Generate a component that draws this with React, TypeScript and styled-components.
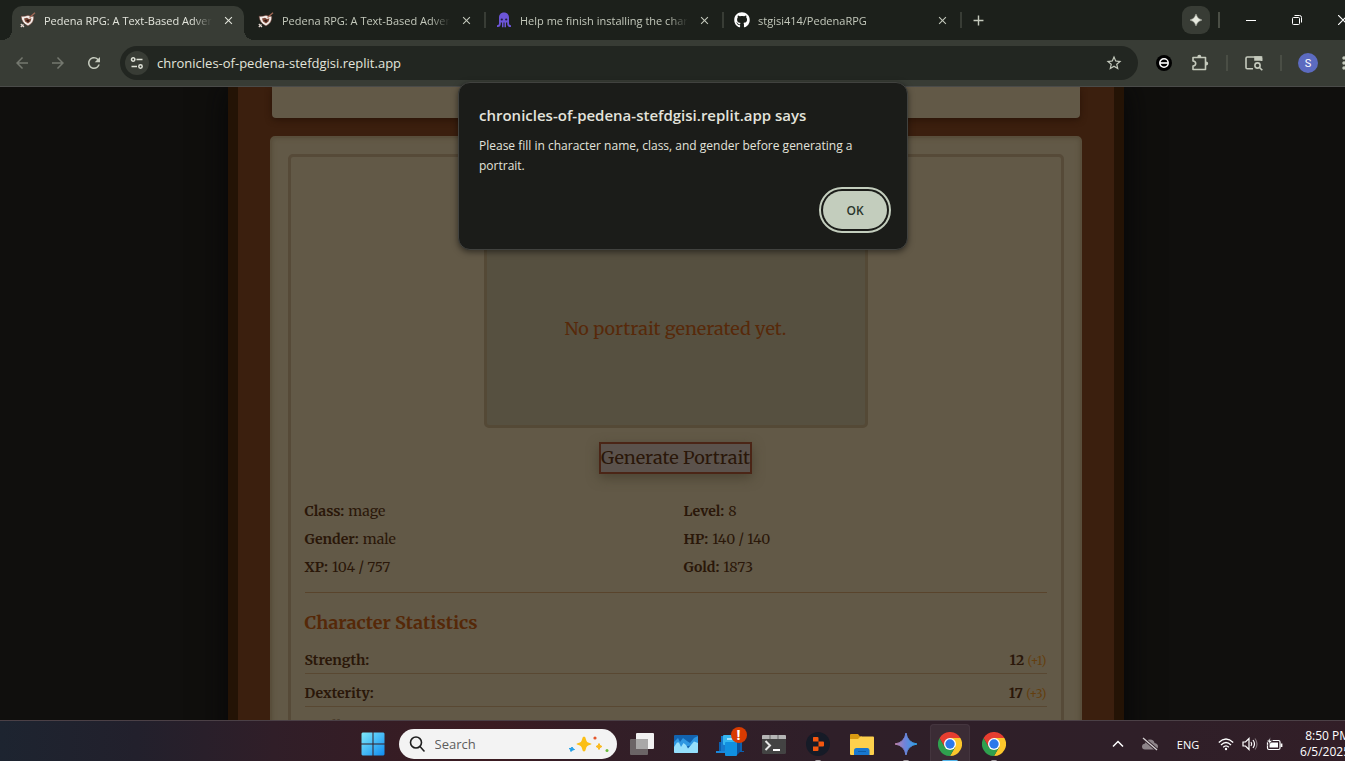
import React from "react";
import styled, { createGlobalStyle, css } from "styled-components";
import { FaGithub } from "react-icons/fa";
import { MdArrowBack, MdArrowForward, MdRefresh, MdStarBorder, MdAdd, MdClose, MdMoreVert } from "react-icons/md";

const GlobalStyle = createGlobalStyle`
  * { box-sizing: border-box; }
  body { margin: 0; background: #100f0d; font-family: "Segoe UI", "Open Sans", "Noto Sans", sans-serif; }
  button, input { font: inherit; color: inherit; border: 0; padding: 0; background: none; }
  h1, h2, h3, p, dl, dd, dt { margin: 0; }
  svg { display: block; flex: none; }
`;

const serif = `Merriweather, "DejaVu Serif Condensed", "DejaVu Serif", serif`;

/* The desktop extends slightly past the right edge of the viewport. */
const Viewport = styled.div`
  height: 100vh;
  overflow: hidden;
`;

const Desktop = styled.div`
  position: relative;
  width: calc(100% + 21px);
  height: 100%;
  display: flex;
  flex-direction: column;
`;

/* ---------- Browser chrome ---------- */

const TabStrip = styled.header`
  display: flex;
  align-items: center;
  flex: none;
  height: 40px;
  padding-left: 12px;
  background: #1c201b;
  color: #c5cabd;
`;

const Tab = styled.div<{ $active?: boolean; $divider?: boolean }>`
  position: relative;
  display: flex;
  align-items: center;
  gap: 8px;
  width: 232px;
  height: 34px;
  margin: 6px 6px 0 0;
  padding: 0 8px 6px;
  font-size: 12px;
  color: #c3c8bb;
  ${(p) =>
    p.$active &&
    css`
      background: #383c35;
      color: #e3e5dc;
      border-radius: 10px 10px 0 0;
      &::before, &::after {
        content: "";
        position: absolute;
        bottom: 0;
        width: 10px;
        height: 10px;
      }
      &::before { left: -10px; background: radial-gradient(circle at 0 0, transparent 10px, #383c35 10px); }
      &::after { right: -10px; background: radial-gradient(circle at 100% 0, transparent 10px, #383c35 10px); }
    `}
  ${(p) =>
    p.$divider &&
    css`
      &::after {
        content: "";
        position: absolute;
        right: -4px;
        top: 6px;
        width: 2px;
        height: 16px;
        background: #383c35;
      }
    `}
`;

const TabTitle = styled.span`
  flex: 1;
  min-width: 0;
  margin-top: 2px;
  overflow: hidden;
  white-space: nowrap;
  font-size: 11px;
  line-height: 18px;
  mask-image: linear-gradient(to right, #000 calc(100% - 20px), transparent);
`;

const TabClose = styled.button`
  display: grid;
  place-items: center;
  width: 16px;
  height: 16px;
`;

const NewTab = styled.button`
  display: grid;
  place-items: center;
  width: 28px;
  height: 28px;
`;

const Spacer = styled.div`
  flex: 1;
`;

const SparkButton = styled.button`
  display: grid;
  place-items: center;
  width: 28px;
  height: 28px;
  border-radius: 9px;
  background: #383c35;
  color: #e6e9df;
`;

const Rule = styled.span`
  width: 2px;
  height: 16px;
  margin: 0 8px;
  background: #4a4e45;
  flex: none;
`;

const CaptionButton = styled.button`
  display: grid;
  place-items: center;
  width: 46px;
  height: 40px;
  color: #fff;
`;

const Toolbar = styled.div`
  display: flex;
  align-items: center;
  flex: none;
  height: 47px;
  padding: 0 4px;
  background: #383c35;
  border-bottom: 1px solid #4a4b49;
  color: #c5cabd;
`;

const ToolButton = styled.button<{ $dim?: boolean; $narrow?: boolean }>`
  display: grid;
  place-items: center;
  width: ${(p) => (p.$narrow ? 34 : 36)}px;
  height: 34px;
  flex: none;
  color: ${(p) => (p.$dim ? "#74786f" : "#c5cabd")};
`;

const Omnibox = styled.div`
  display: flex;
  align-items: center;
  gap: 8px;
  flex: 1;
  height: 34px;
  margin: 0 8px;
  padding: 0 7px 0 5px;
  border-radius: 17px;
  background: #222621;
`;

const SiteInfo = styled.button`
  display: grid;
  place-items: center;
  width: 24px;
  height: 24px;
  border-radius: 12px;
  background: #383c35;
  flex: none;
`;

const Address = styled.input`
  flex: 1;
  min-width: 0;
  height: 24px;
  font-size: 13px;
  color: #e3e5dc;
  outline: 0;
`;

const Avatar = styled.button`
  display: grid;
  place-items: center;
  width: 20px;
  height: 20px;
  margin: 0 8px;
  border-radius: 10px;
  background: #5c6bc0;
  color: #fff;
  font-family: Roboto, sans-serif;
  font-size: 11px;
`;

/* ---------- Game page ---------- */

const Page = styled.main`
  flex: 1;
  min-height: 0;
  overflow: hidden;
  padding-right: 15px;
  background: #100f0d;
  color: #2a1709;
  font-family: ${serif};
  font-size: 14px;
`;

const Book = styled.div`
  max-width: 896px;
  margin: 0 auto;
  padding: 0 32px 32px;
  border: solid #241305;
  border-width: 0 10px;
  background: #3b1f0e;
  box-shadow: 0 0 30px #060607;
`;

const BannerCard = styled.div`
  height: 31px;
  margin: 0 2px 18px;
  border-radius: 0 0 4px 4px;
  background: #625947;
  box-shadow: 0 2px 6px #2a1408;
`;

const SheetCard = styled.section`
  padding: 16px;
  border: 2px solid #594e3b;
  border-radius: 5px;
  background: #625947;
  box-shadow: inset 0 0 5px #564b38;
`;

const Sheet = styled.div`
  padding: 71px 14px 15px;
  border: 3px solid #564a38;
  border-radius: 5px;
`;

const Portrait = styled.div`
  display: grid;
  place-items: center;
  max-width: 384px;
  height: 200px;
  margin: 0 auto 14px;
  border: 3px solid #544936;
  border-radius: 5px;
  background: #565040;
  color: #57290a;
  font-size: 18px;
`;

const GenerateButton = styled.button`
  display: block;
  height: 32px;
  margin: 0 auto 23px;
  border: 2px solid #4b2516;
  background: #5b524c;
  box-shadow: 0 4px 12px #4c4433;
  font-size: 18px;
  line-height: 28px;
  white-space: nowrap;
`;

const Facts = styled.dl`
  display: grid;
  grid-template-columns: 1fr 1fr;
  column-gap: 16px;
  padding-bottom: 11px;
  border-bottom: 1px solid #59442c;
`;

const Fact = styled.div`
  display: flex;
  gap: 4px;
  line-height: 28px;
  font-size: 14px;
  dt { font-weight: 700; }
`;

const SectionTitle = styled.h2`
  margin: 16px 0 4px;
  font-size: 18px;
  line-height: 28px;
  font-weight: 700;
  color: #552808;
`;

const Stat = styled.div`
  display: flex;
  justify-content: space-between;
  height: 33px;
  padding-top: 5px;
  border-bottom: 1px solid #594832;
  font-size: 14px;
  line-height: 28px;
  font-weight: 700;
`;

const Modifier = styled.span`
  font-size: 12px;
  font-weight: 400;
  color: #643f0f;
`;

/* ---------- Alert ---------- */

const Alert = styled.div`
  position: absolute;
  top: 82px;
  left: 0;
  right: 0;
  margin: 0 auto;
  width: 450px;
  padding: 20px;
  border: 1px solid #41423f;
  border-radius: 12px;
  background: #1b1c19;
  color: #e3e3dc;
  box-shadow: 0 2px 6px rgba(0, 0, 0, 0.5);
`;

const AlertTitle = styled.h1`
  font-size: 15px;
  line-height: 24px;
  font-weight: 600;
`;

const AlertText = styled.p`
  margin: 9px 0 15px;
  font-size: 12px;
  line-height: 20px;
`;

const OkButton = styled.button`
  display: block;
  width: 64px;
  height: 38px;
  margin: 0 0 0 auto;
  border-radius: 19px;
  background: #c3cdbd;
  color: #2a352b;
  font-size: 12px;
  font-weight: 600;
  outline: 2px solid #c3cdbd;
  outline-offset: 2px;
`;

/* ---------- Taskbar ---------- */

const Taskbar = styled.footer`
  flex: none;
  height: 41px;
  overflow: hidden;
  border-top: 1px solid #4b4046;
  background: linear-gradient(90deg, #1d2430 0%, #22202c 10%, #301e28 20%, #3b1b21 36%, #331e27 44%, #2f1f29 60%, #2f1f28 85%, #321e27 100%);
`;

const TaskbarRow = styled.div`
  display: grid;
  grid-template-columns: 1fr auto 1fr;
  align-items: center;
  height: 46px;
`;

const Apps = styled.nav`
  grid-column: 2;
  display: flex;
  align-items: center;
`;

const AppButton = styled.button<{ $active?: boolean; $running?: boolean }>`
  position: relative;
  display: grid;
  place-items: center;
  width: 40px;
  height: 40px;
  margin: 0 2px;
  border-radius: 4px;
  ${(p) => p.$active && css`background: #3b2c35; box-shadow: inset 0 0 0 1px #44353e;`}
  ${(p) =>
    (p.$active || p.$running) &&
    css`
      &::after {
        content: "";
        position: absolute;
        bottom: 1px;
        width: ${p.$active ? 16 : 6}px;
        height: 3px;
        border-radius: 2px;
        background: ${p.$active ? "#55b8ee" : "#a49ca1"};
      }
    `}
`;

const SearchBox = styled.label`
  display: flex;
  align-items: center;
  gap: 10px;
  width: 218px;
  height: 30px;
  margin: 0 3px 0 4px;
  padding: 0 7px 0 10px;
  border-radius: 15px;
  background: #f3f3f3;
  input {
    flex: 1;
    min-width: 0;
    font-size: 13px;
    outline: 0;
  }
  input::placeholder { color: #5d5d5d; opacity: 1; }
`;

const Tray = styled.div`
  display: flex;
  align-items: center;
  justify-content: flex-end;
  padding-right: 16px;
  color: #fff;
  font-size: 11px;
`;

const TrayButton = styled.button<{ $w: number }>`
  display: grid;
  place-items: center;
  width: ${(p) => p.$w}px;
  height: 32px;
`;

const Clock = styled.time`
  width: 60px;
  text-align: right;
  white-space: nowrap;
  font-size: 12px;
  line-height: 16px;
`;

/* ---------- Drawings ---------- */

const ShieldIcon = () => (
  <svg width="16" height="16" viewBox="0 0 16 16">
    <path d="M1 4.200Q5 4.600 8 3.200Q11 4.600 13.800 4.200Q14.500 10.500 8 14Q1.500 11 1 4.200Z" fill="#f4ece8" stroke="#5a2f25" strokeWidth=".6" />
    <path d="M4 6.500L7 5.800L9 7L11.500 6.200L10.500 9.500L8 11.500L5 9.500Z" fill="#7a4636" />
    <path d="M6 8.500L8 7.500L9.500 9L8 10Z" fill="#2b1512" />
    <path d="M9.500 5.500L15 .8" stroke="#a06755" strokeWidth="1.400" />
    <path d="M.8 12L4 15M.8 15L3.500 12.500" stroke="#e6d8d2" strokeWidth="1.200" />
  </svg>
);

const SquidIcon = () => (
  <svg width="16" height="16" viewBox="0 0 16 16" fill="#6c55d8">
    <path d="M8 .5C4.800.5 3 2.800 3 5.500V11.500Q3 13.500 1 13.300V15Q4.500 15.500 4.800 12V10.500H6V15.300H7.500V10.500H8.500V15.300H10V10.500H11.200V12Q11.500 15.500 15 15V13.300Q13 13.500 13 11.500V5.500C13 2.800 11.200.5 8 .5Z" />
    <circle cx="5.800" cy="7.500" r="1.100" fill="#1f1a3c" />
    <circle cx="10.200" cy="7.500" r="1.100" fill="#1f1a3c" />
  </svg>
);

const Spark = () => (
  <svg width="12" height="12" viewBox="0 0 14 14" fill="currentColor">
    <path d="M7 0Q8.200 5.800 14 7Q8.200 8.200 7 14Q5.800 8.200 0 7Q5.800 5.800 7 0Z" stroke="currentColor" strokeWidth=".4" />
  </svg>
);

const TuneIcon = () => (
  <svg width="14" height="14" viewBox="0 0 14 14" fill="none" stroke="#dfe2d8" strokeWidth="1.500">
    <circle cx="3.200" cy="3.500" r="1.700" />
    <path d="M6.500 3.500H12.500M1.500 10.500H7" />
    <circle cx="10.500" cy="10.500" r="1.700" />
  </svg>
);

const ExtensionBadge = () => (
  <svg width="16" height="16" viewBox="0 0 16 16" fill="none">
    <circle cx="8" cy="8" r="8" fill="#000" />
    <circle cx="8" cy="8" r="4.200" stroke="#fff" strokeWidth="1.500" />
    <path d="M4 8H12" stroke="#fff" strokeWidth="1.600" />
  </svg>
);

const PuzzleIcon = () => (
  <svg width="18" height="18" viewBox="0 0 18 18" fill="none" stroke="#c5cabd" strokeWidth="1.600" strokeLinejoin="round">
    <path d="M2 3.500H14.500V15.500H2V12Q4.700 11.700 4.700 9.500Q4.700 7.300 2 7Z" />
    <path d="M6.300 3A2 2.200 0 0 1 10.300 3ZM15 7.500A2.200 2 0 0 1 15 11.500Z" fill="#c5cabd" stroke="none" />
  </svg>
);

const LensIcon = () => (
  <svg width="18" height="16" viewBox="0 0 18 16" fill="none" stroke="#c5cabd" strokeWidth="1.600">
    <path d="M8 13.700H2.300Q1 13.700 1 12.400V3.300Q1 2 2.300 2H15.200Q16.500 2 16.500 3.300V6" />
    <path d="M10 2H16.500V5H10Z" fill="#c5cabd" />
    <circle cx="12.500" cy="10.500" r="2.600" />
    <path d="M14.500 12.500L17.300 15.300" />
  </svg>
);

const RestoreIcon = () => (
  <svg width="12" height="12" viewBox="0 0 12 12" fill="none" stroke="#fff" strokeWidth="1">
    <rect x="1.500" y="3.500" width="7" height="7" rx="1" />
    <path d="M3.500 1.500H8.500Q10.500 1.500 10.500 3.500V8.500" />
  </svg>
);

const StartIcon = () => (
  <svg width="24" height="24" viewBox="0 0 24 24">
    <defs>
      <linearGradient id="start" x1="0" y1="0" x2="1" y2="1">
        <stop offset="0" stopColor="#7fe9fb" />
        <stop offset="1" stopColor="#0f8cf0" />
      </linearGradient>
    </defs>
    <path d="M1.500.5H11.500V11.500H.5V1.500ZM12.500.5H22.500L23.500 1.500V11.500H12.500ZM.5 12.500H11.500V23.500H1.500L.5 22.500ZM12.500 12.500H23.500V22.500L22.500 23.500H12.500Z" fill="url(#start)" />
  </svg>
);

const MagnifierIcon = () => (
  <svg width="16" height="16" viewBox="0 0 16 16" fill="none" stroke="#1f1f1f" strokeWidth="1.600" strokeLinecap="round">
    <circle cx="7" cy="6.500" r="5.500" />
    <path d="M11 10.500L15 15" />
  </svg>
);

const SparklesIcon = () => (
  <svg width="42" height="20" viewBox="0 0 42 20">
    <path d="M16 2.500Q17.500 2.500 18 5.500Q18.500 8.500 21.500 9Q23.500 9.500 23.500 10Q23.500 10.500 21.500 11Q18.500 11.500 18 14.500Q17.500 17.500 16 17.500Q14.500 17.500 14 14.500Q13.500 11.500 10.500 11Q8.500 10.500 8.500 10Q8.500 9.500 10.500 9Q13.500 8.500 14 5.500Q14.500 2.500 16 2.500Z" fill="#fbbf16" />
    <path d="M31 9.500Q31.500 12 34 12.500Q31.500 13 31 15.500Q30.500 13 28 12.500Q30.500 12 31 9.500Z" fill="#fbb91c" stroke="#fbb91c" />
    <path d="M4 13L4.800 14.600L6.500 15.500L4.500 16L3 17.500L2.500 15.800L1.200 14.500L3.300 14.400Z" fill="#1b9de8" stroke="#1b9de8" />
    <circle cx="27" cy="4" r="1.600" fill="#e4572c" />
    <circle cx="39" cy="16.500" r="1.500" fill="#6cbb3c" />
  </svg>
);

const TaskViewIcon = () => (
  <svg width="24" height="22" viewBox="0 0 24 22">
    <rect x="6" y="0" width="18" height="16" rx="1" fill="#f1f1f1" />
    <rect x="0" y="6" width="18" height="16" rx="1" fill="#6b6466" />
    <rect x="6" y="6" width="12" height="10" fill="#a9a8a8" />
  </svg>
);

const MonitorIcon = () => (
  <svg width="24" height="18" viewBox="0 0 24 18">
    <rect width="24" height="18" rx="1" fill="#1263b0" />
    <path d="M0 7L4 3L6 7L9 3L13 6L16 8L20 3L24 1V9L0 14Z" fill="#2f97e2" />
    <path d="M0 12L3 7.500L5 7.500L7 12L9.500 8L12 10L14 13.500L17 10L20 6.500L24 8V17Q24 18 23 18H1Q0 18 0 17Z" fill="#95dffc" />
  </svg>
);

const PhoneLinkIcon = () => (
  <svg width="28" height="28" viewBox="0 0 28 28">
    <path d="M3 12H26V21H28V22H2V21H3Z" fill="#0b5fae" />
    <path d="M5 6H10V22H5Z" fill="#1779cc" />
    <path d="M0 21H13V23H0Z" fill="#1a86da" />
    <rect x="7" y="5" width="14" height="10" rx="1" fill="#36b7f0" />
    <rect x="9" y="12" width="12" height="14" rx="1" fill="#1190e0" />
    <path d="M21 12V25L24 22V12Z" fill="#0a519a" />
    <path d="M11 9H16" stroke="#c9f2ff" strokeWidth="1.500" />
  </svg>
);

const AlertBadge = styled.span`
  position: absolute;
  top: 3px;
  right: 3px;
  width: 16px;
  height: 16px;
  border-radius: 8px;
  background: #d83b01;
  color: #fff;
  font-size: 14px;
  line-height: 16px;
  font-weight: 700;
  text-align: center;
`;

const TerminalIcon = () => (
  <svg width="24" height="19" viewBox="0 0 24 19" fill="none">
    <rect width="24" height="19" rx="1.500" fill="#434343" />
    <path d="M1 0H23Q24 0 24 1V4H0V1Q0 0 1 0Z" fill="#b5b5b5" />
    <path d="M8 0V4M16 0V4" stroke="#666" />
    <path d="M3.500 6L8 10.500L3.500 15" stroke="#e6e6e6" strokeWidth="2" />
    <path d="M11 15H18" stroke="#fff" strokeWidth="2" />
  </svg>
);

const ReplitIcon = () => (
  <svg width="24" height="24" viewBox="0 0 24 24">
    <circle cx="12" cy="12" r="12" fill="#161b27" />
    <path d="M7.500 5H11.500Q12.500 5 12.500 6V9.500H7.500Q7 9.500 7 9V5.500ZM12.500 9.500H17Q18 9.500 18 10.500V13.500Q18 14.500 17 14.500H12.500ZM7 14.500H12.500V18Q12.500 19 11.500 19H7.500Q7 19 7 18.500Z" fill="#f3570f" />
  </svg>
);

const FolderIcon = () => (
  <svg width="26" height="24" viewBox="0 0 26 24">
    <path d="M1 3Q1 2 2 2H9L11 4.500H13V10H1Z" fill="#d99a12" />
    <path d="M1 7H9L11.500 4.500H24Q25 4.500 25 5.500V22Q25 23 24 23H2Q1 23 1 22Z" fill="#fdd04c" />
    <path d="M5 23V18.500Q5 16 7.500 16H18.500Q20.500 16 20.500 18.500V23Z" fill="#1877cf" />
    <path d="M9 19.500H17" stroke="#0d5da8" />
  </svg>
);

const GeminiIcon = () => (
  <svg width="24" height="24" viewBox="0 0 24 24">
    <defs>
      <linearGradient id="gem" x1="0" y1="0" x2="1" y2="0">
        <stop offset="0" stopColor="#c080a8" />
        <stop offset=".45" stopColor="#6f83da" />
        <stop offset="1" stopColor="#2aa3e8" />
      </linearGradient>
    </defs>
    <path d="M12 1Q13.500 10.500 23 12Q13.500 13.500 12 23Q10.500 13.500 1 12Q10.500 10.500 12 1Z" fill="url(#gem)" stroke="url(#gem)" />
  </svg>
);

const ChromeIcon = () => (
  <svg width="24" height="24" viewBox="0 0 24 24">
    <path d="M12 12V6H22.400A12 12 0 0 1 12 24L17.200 15Z" fill="#fcc72b" />
    <path d="M12 24A12 12 0 0 1 1.600 6L6.800 15L12 18L17.200 15Z" fill="#2fa04e" />
    <path d="M12 6H22.400A12 12 0 0 0 1.600 6L6.800 15Z" fill="#e63e30" />
    <circle cx="12" cy="12" r="6" fill="#fff" />
    <circle cx="12" cy="12" r="4.700" fill="#2b78ea" />
  </svg>
);

const ChevronIcon = () => (
  <svg width="12" height="12" viewBox="0 0 12 12" fill="none" stroke="#fff" strokeWidth="1.500">
    <path d="M1 8.500L6 3.500L11 8.500" />
  </svg>
);

const CloudOffIcon = () => (
  <svg width="18" height="14" viewBox="0 0 18 14">
    <path d="M4 12.500Q1 12.500 1 9.500Q1 7 4 6.500Q5 2.500 9 2.500Q13 2.500 13.500 6Q17 6.500 17 9.500Q17 12.500 14 12.500Z" fill="#8d8489" />
    <path d="M2 1L16 13" stroke="#2f1f28" strokeWidth="3" />
    <path d="M2 1L16 13" stroke="#d5d0d2" strokeWidth="1.300" />
  </svg>
);

const WifiIcon = () => (
  <svg width="16" height="14" viewBox="0 0 16 14" fill="none" stroke="#fff" strokeWidth="1.300">
    <path d="M.8 5.500Q8-1.500 15.200 5.500M3 8Q8 3 13 8M5.200 10.200Q8 7.500 10.800 10.200" />
    <circle cx="8" cy="12" r="1.200" fill="#fff" stroke="none" />
  </svg>
);

const VolumeIcon = () => (
  <svg width="16" height="14" viewBox="0 0 16 14" fill="none" stroke="#fff" strokeWidth="1.200">
    <path d="M1 5H3.500L7 1.500V12.500L3.500 9H1Z" />
    <path d="M9 5Q10.500 7 9 9M11 3Q14 7 11 11" />
    <path d="M13 1.500Q17 7 13 12.500" stroke="#7d7277" />
  </svg>
);

const BatteryIcon = () => (
  <svg width="17" height="14" viewBox="0 0 17 14" fill="none" stroke="#fff" strokeWidth="1.200">
    <rect x="1.500" y="3.500" width="12.500" height="9" rx="1.500" />
    <rect x="3.500" y="5.500" width="8.500" height="5" fill="#fff" stroke="none" />
    <path d="M15.500 6.500V10" strokeWidth="1.800" />
    <path d="M4.500 0L1 5H3L2 8.500L6.500 3.500H4Z" fill="#fff" stroke="#2f1f28" strokeWidth=".7" />
  </svg>
);

/* ---------- Content ---------- */

const tabs = [
  { title: "Pedena RPG: A Text-Based Adventure", icon: <ShieldIcon /> },
  { title: "Pedena RPG: A Text-Based Adventure", icon: <ShieldIcon /> },
  { title: "Help me finish installing the character", icon: <SquidIcon /> },
  { title: "stgisi414/PedenaRPG", icon: <FaGithub size={16} color="#fff" /> },
];

const facts = [
  ["Class:", "mage"],
  ["Level:", "8"],
  ["Gender:", "male"],
  ["HP:", "140 / 140"],
  ["XP:", "104 / 757"],
  ["Gold:", "1873"],
];

const stats = [
  ["Strength:", "12", "(+1)"],
  ["Dexterity:", "17", "(+3)"],
  ["Intelligence:", "14", "(+2)"],
];

export default function App() {
  return (
    <Viewport>
      <GlobalStyle />
      <Desktop>
        <TabStrip>
          {tabs.map((tab, i) => (
            <Tab key={i} $active={i === 0} $divider={i > 0}>
              {tab.icon}
              <TabTitle>{tab.title}</TabTitle>
              <TabClose aria-label="Close tab"><MdClose size={13} /></TabClose>
            </Tab>
          ))}
          <NewTab aria-label="New tab"><MdAdd size={17} /></NewTab>
          <Spacer />
          <SparkButton aria-label="Assistant"><Spark /></SparkButton>
          <Rule />
          <CaptionButton aria-label="Minimize">
            <svg width="10" height="10" viewBox="0 0 10 10"><path d="M0 5.500H10" stroke="#fff" /></svg>
          </CaptionButton>
          <CaptionButton aria-label="Restore"><RestoreIcon /></CaptionButton>
          <CaptionButton aria-label="Close">
            <svg width="10" height="10" viewBox="0 0 10 10"><path d="M0 0L10 10M10 0L0 10" stroke="#fff" strokeWidth="1.200" /></svg>
          </CaptionButton>
        </TabStrip>
        <Toolbar>
          <ToolButton $dim aria-label="Back"><MdArrowBack size={18} /></ToolButton>
          <ToolButton $dim aria-label="Forward"><MdArrowForward size={18} /></ToolButton>
          <ToolButton aria-label="Reload"><MdRefresh size={18} /></ToolButton>
          <Omnibox>
            <SiteInfo aria-label="Site information"><TuneIcon /></SiteInfo>
            <Address aria-label="Address" defaultValue="chronicles-of-pedena-stefdgisi.replit.app" />
            <ToolButton $narrow aria-label="Bookmark"><MdStarBorder size={18} /></ToolButton>
          </Omnibox>
          <ToolButton aria-label="Extension"><ExtensionBadge /></ToolButton>
          <ToolButton aria-label="Extensions"><PuzzleIcon /></ToolButton>
          <Rule />
          <ToolButton aria-label="Search with Lens"><LensIcon /></ToolButton>
          <Rule />
          <ToolButton as={Avatar} aria-label="Profile">S</ToolButton>
          <ToolButton aria-label="Menu"><MdMoreVert size={20} /></ToolButton>
        </Toolbar>

        <Page>
          <Book>
            <BannerCard />
            <SheetCard>
              <Sheet>
                <Portrait>No portrait generated yet.</Portrait>
                <GenerateButton>Generate Portrait</GenerateButton>
                <Facts>
                  {facts.map(([label, value]) => (
                    <Fact key={label}>
                      <dt>{label}</dt>
                      <dd>{value}</dd>
                    </Fact>
                  ))}
                </Facts>
                <SectionTitle>Character Statistics</SectionTitle>
                <dl>
                  {stats.map(([label, value, mod]) => (
                    <Stat key={label}>
                      <dt>{label}</dt>
                      <dd>{value} <Modifier>{mod}</Modifier></dd>
                    </Stat>
                  ))}
                </dl>
              </Sheet>
            </SheetCard>
          </Book>
        </Page>

        <Taskbar>
          <TaskbarRow>
            <Apps>
              <AppButton aria-label="Start"><StartIcon /></AppButton>
              <SearchBox>
                <MagnifierIcon />
                <input type="text" placeholder="Search" aria-label="Search" />
                <SparklesIcon />
              </SearchBox>
              <AppButton aria-label="Task view"><TaskViewIcon /></AppButton>
              <AppButton aria-label="System monitor"><MonitorIcon /></AppButton>
              <AppButton aria-label="Phone Link"><PhoneLinkIcon /><AlertBadge>!</AlertBadge></AppButton>
              <AppButton aria-label="Terminal"><TerminalIcon /></AppButton>
              <AppButton $running aria-label="Replit"><ReplitIcon /></AppButton>
              <AppButton aria-label="File Explorer"><FolderIcon /></AppButton>
              <AppButton $running aria-label="Gemini"><GeminiIcon /></AppButton>
              <AppButton $active aria-label="Chrome"><ChromeIcon /></AppButton>
              <AppButton $running aria-label="Chrome, second profile"><ChromeIcon /></AppButton>
            </Apps>
            <Tray>
              <TrayButton $w={32} aria-label="Show hidden icons"><ChevronIcon /></TrayButton>
              <TrayButton $w={32} aria-label="OneDrive"><CloudOffIcon /></TrayButton>
              <TrayButton $w={44}>ENG</TrayButton>
              <TrayButton $w={32} aria-label="Network"><WifiIcon /></TrayButton>
              <TrayButton $w={16} aria-label="Volume"><VolumeIcon /></TrayButton>
              <TrayButton $w={32} aria-label="Battery"><BatteryIcon /></TrayButton>
              <Clock>8:50 PM<br />6/5/2025</Clock>
            </Tray>
          </TaskbarRow>
        </Taskbar>

        <Alert role="alertdialog" aria-labelledby="alert-title" aria-describedby="alert-text">
          <AlertTitle id="alert-title">chronicles-of-pedena-stefdgisi.replit.app says</AlertTitle>
          <AlertText id="alert-text">
            Please fill in character name, class, and gender before generating a portrait.
          </AlertText>
          <OkButton>OK</OkButton>
        </Alert>
      </Desktop>
    </Viewport>
  );
}
